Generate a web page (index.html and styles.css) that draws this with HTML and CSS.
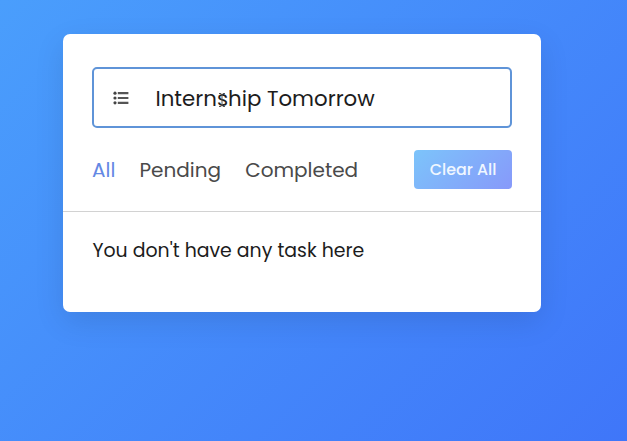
FILE: index.html
```html
<!DOCTYPE html>
<html lang="en">
<head>
<meta charset="utf-8">
<title>Todo List</title>
<link rel="stylesheet" href="styles.css">
</head>
<body>
<main class="wrapper">
  <div class="task-input">
    <svg class="list-icon" viewBox="0 0 16 14"><path d="M4.8 2.2h10.6M4.8 7h10.6M4.8 11.8h10.6"/><circle cx="2" cy="2.2" r="1.6"/><circle cx="2" cy="7" r="1.6"/><circle cx="2" cy="11.8" r="1.6"/></svg>
    <span class="task-text">Internship Tomorrow</span>
    <svg class="cursor" viewBox="0 0 10 16"><path d="M2 1.5h2l1 1 1-1h2M5 2.5v11M2 14.5h2l1-1 1 1h2"/></svg>
  </div>
  <div class="controls">
    <nav class="filters"><span class="active">All</span><span>Pending</span><span>Completed</span></nav>
    <button class="clear-btn">Clear All</button>
  </div>
  <div class="task-box"><span>You don't have any task here</span></div>
</main>
</body>
</html>
```
FILE: styles.css
```css
* { box-sizing: border-box; margin: 0; padding: 0; }
body {
  width: 627px; height: 441px; overflow: hidden;
  padding: 33.5px 0 0 62.5px;
  font-family: Poppins, Inter, "Open Sans", sans-serif;
  background: linear-gradient(135deg, #4a9efc, #3f76f9);
}
.wrapper { width: 478.8px; height: 278.5px; background: #fff; border-radius: 7px; padding-top: 33.5px; box-shadow: 0 10px 30px rgba(0,0,0,.1); }
.task-input { position: relative; display: flex; align-items: center; height: 61px; margin: 0 29.5px; border: 2px solid #5f94d8; border-radius: 5px; padding-left: 19px; }
.list-icon { width: 16px; height: 14px; fill: #444; stroke: #555; stroke-width: 2.2; }
.list-icon circle { stroke: none; }
.task-text { margin: 1px 0 0 26.5px; font-size: 21.3px; color: #1c1c1c; white-space: nowrap; }
.cursor { position: absolute; left: 123px; top: 22.5px; width: 10px; height: 16px; fill: none; stroke: #555; }
.controls { display: flex; justify-content: space-between; align-items: center; height: 84.4px; padding: 0 29.5px; border-bottom: 1px solid #d2d2d2; }
.filters { display: flex; gap: 24.2px; font-size: 20px; color: #4a4a4a; }
.active { color: #6488e4; }
.clear-btn { width: 97.5px; height: 39.5px; border: 0; border-radius: 4px; font: 500 15.9px Poppins, Inter, sans-serif; color: #f0f7ff; background: linear-gradient(135deg, #7cc4fa, #8799fa); }
.task-box { padding: 23.4px 30px; font-size: 18.9px; color: #1c1c1c; }
```
